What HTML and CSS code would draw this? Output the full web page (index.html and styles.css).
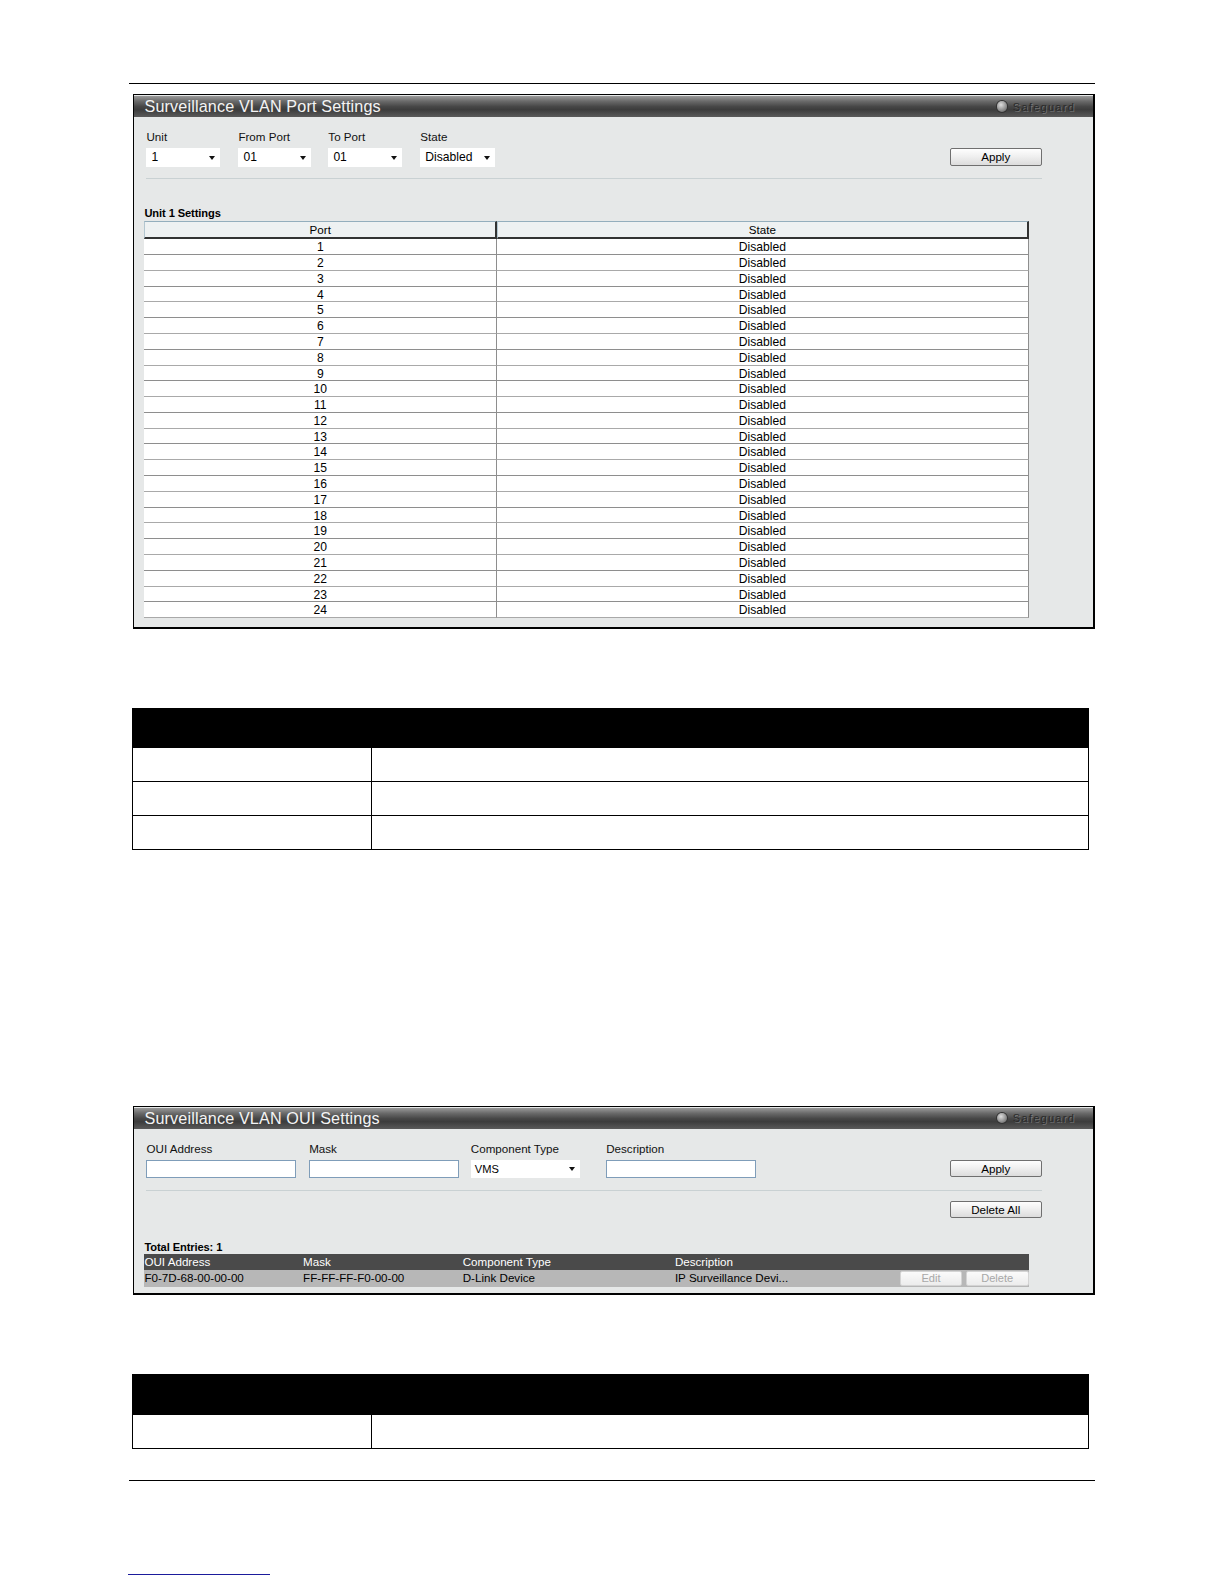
FILE: index.html
```html
<!DOCTYPE html>
<html>
<head>
<meta charset="utf-8">
<link rel="stylesheet" href="styles.css">
</head>
<body>
<div class="page">
  <div class="rule rule-top"></div>

  <div class="panel panel-port">
    <div class="panel-head">
      <span class="panel-title">Surveillance VLAN Port Settings</span>
      <span class="safeguard"><span class="sg-dot"></span><span class="sg-text">Safeguard</span></span>
    </div>
    <div class="panel-body">
      <div class="form-row">
        <div class="field f-unit">
          <div class="lbl">Unit</div>
          <div class="sel w73"><span>1</span></div>
        </div>
        <div class="field f-from">
          <div class="lbl">From Port</div>
          <div class="sel w72"><span>01</span></div>
        </div>
        <div class="field f-to">
          <div class="lbl">To Port</div>
          <div class="sel w73"><span>01</span></div>
        </div>
        <div class="field f-state">
          <div class="lbl">State</div>
          <div class="sel w74"><span>Disabled</span></div>
        </div>
        <div class="btn-wrap"><button class="btn btn-apply">Apply</button></div>
      </div>
      <div class="sep"></div>
      <div class="caption">Unit 1 Settings</div>
      <div class="ports">
        <div class="phead">
          <div class="pc c-port">Port</div>
          <div class="pc c-state">State</div>
        </div>
        <div class="prow"><div class="pc c-port">1</div><div class="pc c-state">Disabled</div></div>
        <div class="prow"><div class="pc c-port">2</div><div class="pc c-state">Disabled</div></div>
        <div class="prow"><div class="pc c-port">3</div><div class="pc c-state">Disabled</div></div>
        <div class="prow"><div class="pc c-port">4</div><div class="pc c-state">Disabled</div></div>
        <div class="prow"><div class="pc c-port">5</div><div class="pc c-state">Disabled</div></div>
        <div class="prow"><div class="pc c-port">6</div><div class="pc c-state">Disabled</div></div>
        <div class="prow"><div class="pc c-port">7</div><div class="pc c-state">Disabled</div></div>
        <div class="prow"><div class="pc c-port">8</div><div class="pc c-state">Disabled</div></div>
        <div class="prow"><div class="pc c-port">9</div><div class="pc c-state">Disabled</div></div>
        <div class="prow"><div class="pc c-port">10</div><div class="pc c-state">Disabled</div></div>
        <div class="prow"><div class="pc c-port">11</div><div class="pc c-state">Disabled</div></div>
        <div class="prow"><div class="pc c-port">12</div><div class="pc c-state">Disabled</div></div>
        <div class="prow"><div class="pc c-port">13</div><div class="pc c-state">Disabled</div></div>
        <div class="prow"><div class="pc c-port">14</div><div class="pc c-state">Disabled</div></div>
        <div class="prow"><div class="pc c-port">15</div><div class="pc c-state">Disabled</div></div>
        <div class="prow"><div class="pc c-port">16</div><div class="pc c-state">Disabled</div></div>
        <div class="prow"><div class="pc c-port">17</div><div class="pc c-state">Disabled</div></div>
        <div class="prow"><div class="pc c-port">18</div><div class="pc c-state">Disabled</div></div>
        <div class="prow"><div class="pc c-port">19</div><div class="pc c-state">Disabled</div></div>
        <div class="prow"><div class="pc c-port">20</div><div class="pc c-state">Disabled</div></div>
        <div class="prow"><div class="pc c-port">21</div><div class="pc c-state">Disabled</div></div>
        <div class="prow"><div class="pc c-port">22</div><div class="pc c-state">Disabled</div></div>
        <div class="prow"><div class="pc c-port">23</div><div class="pc c-state">Disabled</div></div>
        <div class="prow"><div class="pc c-port">24</div><div class="pc c-state">Disabled</div></div>
      </div>
    </div>
  </div>

  <table class="doc doc-1">
    <tr class="doc-head"><td class="d1"></td><td class="d2"></td></tr>
    <tr><td class="d1"></td><td class="d2"></td></tr>
    <tr><td class="d1"></td><td class="d2"></td></tr>
    <tr><td class="d1"></td><td class="d2"></td></tr>
  </table>

  <div class="panel panel-oui">
    <div class="panel-head">
      <span class="panel-title">Surveillance VLAN OUI Settings</span>
      <span class="safeguard"><span class="sg-dot"></span><span class="sg-text">Safeguard</span></span>
    </div>
    <div class="panel-body">
      <div class="form-row">
        <div class="field f-oui">
          <div class="lbl">OUI Address</div>
          <div class="inp"></div>
        </div>
        <div class="field f-mask">
          <div class="lbl">Mask</div>
          <div class="inp"></div>
        </div>
        <div class="field f-comp">
          <div class="lbl">Component Type</div>
          <div class="sel w108 small"><span>VMS</span></div>
        </div>
        <div class="field f-desc">
          <div class="lbl">Description</div>
          <div class="inp"></div>
        </div>
        <div class="btn-wrap"><button class="btn btn-apply">Apply</button></div>
      </div>
      <div class="sep sep-oui"></div>
      <div class="del-row"><button class="btn">Delete All</button></div>
      <div class="caption caption-oui">Total Entries: 1</div>
      <div class="oui">
        <div class="ohead">
          <div class="oc o1">OUI Address</div>
          <div class="oc o2">Mask</div>
          <div class="oc o3">Component Type</div>
          <div class="oc o4">Description</div>
        </div>
        <div class="orow">
          <div class="oc o1">F0-7D-68-00-00-00</div>
          <div class="oc o2">FF-FF-FF-F0-00-00</div>
          <div class="oc o3">D-Link Device</div>
          <div class="oc o4 o4d">IP Surveillance Devi...</div>
          <div class="oc o5"><button class="btn-dis b-edit">Edit</button></div>
          <div class="oc o6"><button class="btn-dis b-del">Delete</button></div>
        </div>
      </div>
    </div>
  </div>

  <table class="doc doc-2">
    <tr class="doc-head"><td class="d1"></td><td class="d2"></td></tr>
    <tr><td class="d1"></td><td class="d2"></td></tr>
  </table>

  <div class="rule rule-bottom"></div>
  <div class="footlink"></div>
</div>
</body>
</html>
```

FILE: styles.css
```css
html, body {
  margin: 0;
  padding: 0;
  background: #ffffff;
  overflow: hidden;
}

body {
  font-family: "Liberation Sans", Arial, sans-serif;
  color: #000;
  zoom: 1.0104;
}

.page {
  width: 956px;
  margin-left: 128px;
  padding-top: 82px;
  padding-bottom: 4px;
}

.rule {
  height: 1px;
  background: #000;
}

/* ---------- panels ---------- */
.panel {
  margin-left: 4px;
  width: 949px;
  border: 1px solid #000;
  border-right-width: 2px;
  border-bottom-width: 2px;
  background: #e6e8e8;
}

.panel-port {
  margin-top: 10px;
}

.panel-oui {
  margin-top: 253px;
}

.panel-head {
  height: 21px;
  margin-top: 1px;
  display: flex;
  align-items: center;
  justify-content: space-between;
  padding: 0 18px 0 10px;
  background: linear-gradient(#9a9a9a 0%, #6a6a6a 25%, #474747 50%, #3c3c3c 65%, #5a5a5a 100%);
}

.panel-title {
  color: #f4f4f4;
  font-size: 16px;
  line-height: 20px;
  letter-spacing: 0.15px;
}

.safeguard {
  display: flex;
  align-items: center;
  gap: 6px;
}

.sg-dot {
  width: 10px;
  height: 10px;
  border-radius: 50%;
  background: radial-gradient(circle at 40% 35%, #dedede 0%, #a0a0a0 45%, #555 100%);
  box-shadow: 0 0 0 1px #333;
}

.sg-text {
  font-size: 11px;
  letter-spacing: 1.2px;
  color: #2a2a2a;
  text-shadow: 1px 1px 0 rgba(170, 170, 170, 0.45);
}

.panel-body {
  padding: 13px 51px 0 10px;
}

.panel-port .panel-body {
  padding-bottom: 9px;
}

.panel-oui .panel-body {
  padding-bottom: 6px;
}

/* ---------- form ---------- */
.form-row {
  display: flex;
  align-items: flex-end;
  margin-left: 2px;
}

.field {
  display: flex;
  flex-direction: column;
  gap: 5px;
}

.f-unit { width: 91px; }
.f-from { width: 89px; }
.f-to { width: 91px; }
.f-state { width: 80px; }

.f-oui { width: 161px; }
.f-mask { width: 160px; }
.f-comp { width: 134px; }
.f-desc { width: 148px; }

.lbl {
  font-size: 11.5px;
  line-height: 13px;
  color: #111;
}

.sel {
  position: relative;
  height: 18px;
  background: #fff;
  font-size: 12px;
  line-height: 18px;
  padding-left: 5px;
  box-sizing: border-box;
}

.sel.small {
  font-size: 11px;
  padding-left: 4px;
}

.sel::after {
  content: "";
  position: absolute;
  right: 5px;
  top: 7px;
  border-left: 3.5px solid transparent;
  border-right: 3.5px solid transparent;
  border-top: 4px solid #111;
}

.w72 { width: 72px; }
.w73 { width: 73px; }
.w74 { width: 74px; }
.w108 { width: 108px; }

.inp {
  width: 148px;
  height: 18px;
  box-sizing: border-box;
  background: #fff;
  border: 1px solid #7f9db9;
}

.btn-wrap {
  margin-left: auto;
  padding-bottom: 1px;
}

.btn {
  display: block;
  width: 91px;
  height: 17px;
  padding: 0;
  margin: 0;
  font-family: "Liberation Sans", Arial, sans-serif;
  font-size: 11.5px;
  line-height: 15px;
  color: #000;
  background: linear-gradient(#fefefe 0%, #f0f0f0 45%, #dcdcdc 100%);
  border: 1px solid #6f6f6f;
  border-radius: 2px;
}

.sep {
  height: 1px;
  background: #c9d1d3;
  margin: 11px 0 0 2px;
}

.sep-oui {
  margin-top: 11px;
}

.del-row {
  display: flex;
  justify-content: flex-end;
  margin-top: 10px;
}

.caption {
  font-size: 11px;
  line-height: 13px;
  font-weight: bold;
  margin-top: 28px;
  margin-bottom: 1px;
  letter-spacing: -0.1px;
}

.caption-oui {
  margin-top: 23px;
  margin-bottom: 0;
}

/* ---------- port table ---------- */
.ports {
  width: 875px;
  font-size: 12px;
}

.phead,
.prow {
  display: flex;
}

.pc {
  box-sizing: border-box;
  text-align: center;
}

.c-port { width: 349px; }
.c-state { width: 526px; }

.phead .pc {
  height: 18px;
  font-size: 11.5px;
  line-height: 16px;
  background: #eef1f2;
  border-top: 1px solid #94aebd;
  border-left: 1px solid #b3c6d0;
  border-right: 2px solid #333;
  border-bottom: 2px solid #333;
}

.prow .pc {
  height: 15.62px;
  line-height: 16px;
  background: #fff;
  border-bottom: 1px solid #8e8e8e;
}

.prow .c-port {
  border-right: 1px solid #8e8e8e;
}

.prow .c-state {
  border-right: 1px solid #8e8e8e;
}

.prow:nth-child(odd) .pc {
  border-bottom-color: #a9a9a9;
}

/* ---------- OUI table ---------- */
.oui {
  width: 875px;
  font-size: 11.5px;
}

.ohead,
.orow {
  display: flex;
  height: 16px;
  line-height: 16px;
  white-space: nowrap;
}

.ohead {
  color: #fff;
  background: #4a4a4a;
}

.orow {
  background: #b7b7b7;
}

.o1 { width: 157px; }
.o2 { width: 158px; }
.o3 { width: 210px; }
.o4 { flex: 1; }
.o4d { flex: none; width: 223px; }
.o5 { width: 65px; }
.o6 { width: 62px; }

.o5, .o6 {
  display: flex;
  align-items: center;
}

.btn-dis {
  display: block;
  height: 15px;
  padding: 0;
  margin: 0;
  font-family: "Liberation Sans", Arial, sans-serif;
  font-size: 11px;
  line-height: 13px;
  color: #a8a8a8;
  background: linear-gradient(#fbfbfb, #ececec);
  border: 1px solid #d4d4d4;
  border-radius: 2px;
}

.b-edit { width: 61px; }
.b-del { width: 62px; }

/* ---------- doc tables ---------- */
.doc {
  width: 947px;
  margin-left: 3px;
  border-collapse: collapse;
}

.doc td {
  border: 1.5px solid #000;
  padding: 0;
  height: 32.6px;
}

.doc .d1 { width: 235px; }

.doc .doc-head td {
  background: #000;
  height: 38px;
}

.doc-1 { margin-top: 78px; }
.doc-2 { margin-top: 79px; }

.rule-bottom {
  margin-top: 31px;
}

.footlink {
  width: 140px;
  height: 1px;
  margin-left: -1px;
  margin-top: 92px;
  background: #1b1b9c;
}
```
